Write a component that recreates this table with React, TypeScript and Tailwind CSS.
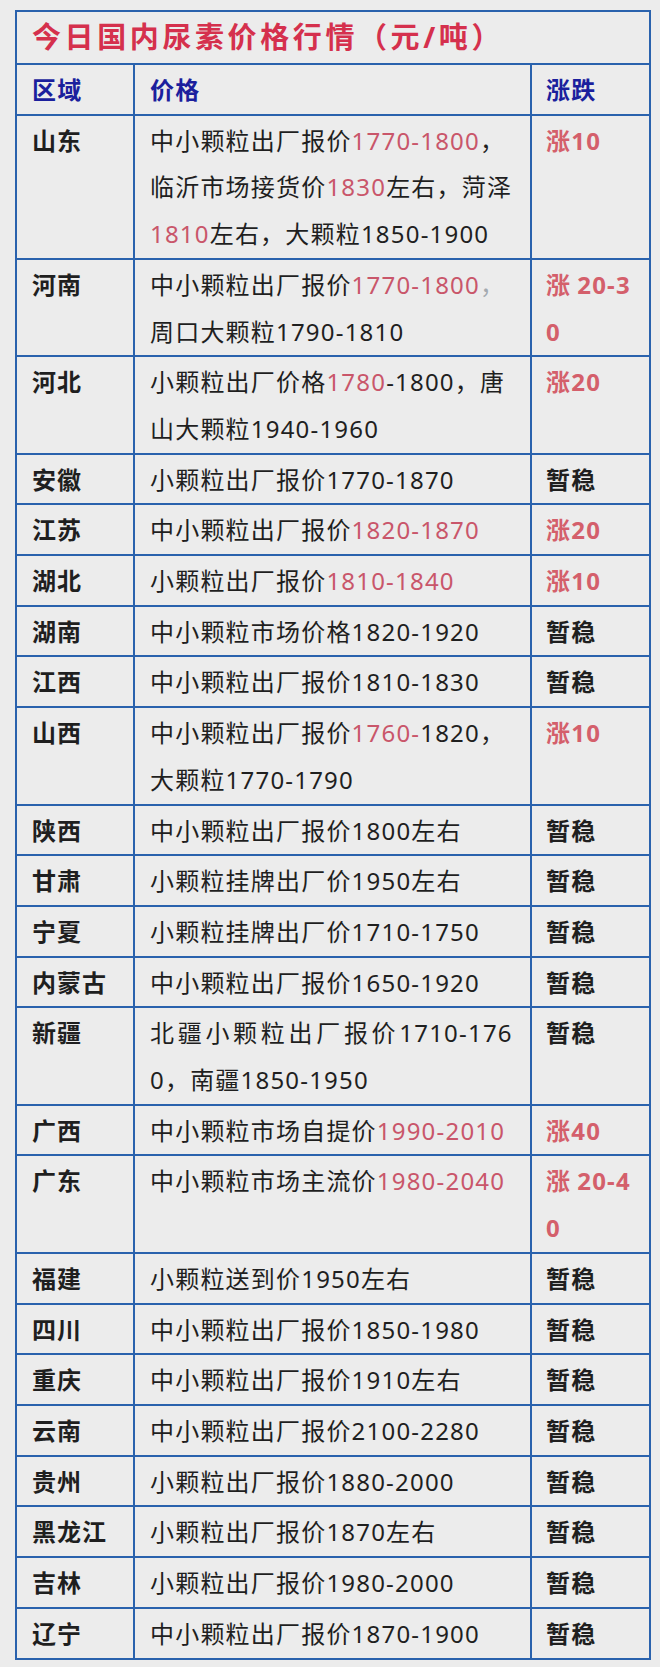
type Seg = { text: string; tone?: "red" | "muted"; wide?: boolean };
type Row = { region: string; lines: Seg[][]; change: string[]; up?: boolean };

const t = (text: string): Seg => ({ text });
const red = (text: string): Seg => ({ text, tone: "red" });

const rows: Row[] = [
  {
    region: "山东",
    lines: [
      [t("中小颗粒出厂报价"), red("1770-1800"), t("，")],
      [t("临沂市场接货价"), red("1830"), t("左右，菏泽")],
      [red("1810"), t("左右，大颗粒1850-1900")],
    ],
    change: ["涨10"],
    up: true,
  },
  {
    region: "河南",
    lines: [
      [t("中小颗粒出厂报价"), red("1770-1800"), { text: "，", tone: "muted" }],
      [t("周口大颗粒1790-1810")],
    ],
    change: ["涨 20-3", "0"],
    up: true,
  },
  {
    region: "河北",
    lines: [
      [t("小颗粒出厂价格"), red("1780"), t("-1800，唐")],
      [t("山大颗粒1940-1960")],
    ],
    change: ["涨20"],
    up: true,
  },
  { region: "安徽", lines: [[t("小颗粒出厂报价1770-1870")]], change: ["暂稳"] },
  { region: "江苏", lines: [[t("中小颗粒出厂报价"), red("1820-1870")]], change: ["涨20"], up: true },
  { region: "湖北", lines: [[t("小颗粒出厂报价"), red("1810-1840")]], change: ["涨10"], up: true },
  { region: "湖南", lines: [[t("中小颗粒市场价格1820-1920")]], change: ["暂稳"] },
  { region: "江西", lines: [[t("中小颗粒出厂报价1810-1830")]], change: ["暂稳"] },
  {
    region: "山西",
    lines: [
      [t("中小颗粒出厂报价"), red("1760-"), t("1820，")],
      [t("大颗粒1770-1790")],
    ],
    change: ["涨10"],
    up: true,
  },
  { region: "陕西", lines: [[t("中小颗粒出厂报价1800左右")]], change: ["暂稳"] },
  { region: "甘肃", lines: [[t("小颗粒挂牌出厂价1950左右")]], change: ["暂稳"] },
  { region: "宁夏", lines: [[t("小颗粒挂牌出厂价1710-1750")]], change: ["暂稳"] },
  { region: "内蒙古", lines: [[t("中小颗粒出厂报价1650-1920")]], change: ["暂稳"] },
  {
    region: "新疆",
    lines: [
      [{ text: "北疆小颗粒出厂报价", wide: true }, t("1710-176")],
      [t("0，南疆1850-1950")],
    ],
    change: ["暂稳"],
  },
  { region: "广西", lines: [[t("中小颗粒市场自提价"), red("1990-2010")]], change: ["涨40"], up: true },
  {
    region: "广东",
    lines: [[t("中小颗粒市场主流价"), red("1980-2040")]],
    change: ["涨 20-4", "0"],
    up: true,
  },
  { region: "福建", lines: [[t("小颗粒送到价1950左右")]], change: ["暂稳"] },
  { region: "四川", lines: [[t("中小颗粒出厂报价1850-1980")]], change: ["暂稳"] },
  { region: "重庆", lines: [[t("中小颗粒出厂报价1910左右")]], change: ["暂稳"] },
  { region: "云南", lines: [[t("中小颗粒出厂报价2100-2280")]], change: ["暂稳"] },
  { region: "贵州", lines: [[t("小颗粒出厂报价1880-2000")]], change: ["暂稳"] },
  { region: "黑龙江", lines: [[t("小颗粒出厂报价1870左右")]], change: ["暂稳"] },
  { region: "吉林", lines: [[t("小颗粒出厂报价1980-2000")]], change: ["暂稳"] },
  { region: "辽宁", lines: [[t("中小颗粒出厂报价1870-1900")]], change: ["暂稳"] },
];

const cell = "border-2 border-[#2a62ad] align-top pt-[2px] pb-0 leading-[46.7px]";

function SegSpan({ seg }: { seg: Seg }) {
  const tone =
    seg.tone === "red" ? "text-[#c9566a]" : seg.tone === "muted" ? "text-[#a3aab0]" : "";
  return <span className={`${tone} ${seg.wide ? "tracking-[3.7px]" : ""}`}>{seg.text}</span>;
}

function ChangeLine({ text }: { text: string }) {
  if (text.includes(" ")) {
    const [head, rest] = text.split(" ");
    return (
      <div className="whitespace-nowrap">
        <span className="mr-[6px]">{head}</span>
        {rest}
      </div>
    );
  }
  return <div className="whitespace-nowrap">{text}</div>;
}

export default function App() {
  return (
    <div className="min-h-[1667px] bg-[#ececec] pt-[10px] pl-[15px] font-['Noto_Sans','Noto_Sans_CJK_SC',sans-serif]">
      <table className="table-fixed border-collapse w-[634px] text-[24px] tracking-[1.2px] text-[#1f1f1f]">
        <colgroup>
          <col className="w-[118px]" />
          <col className="w-[397px]" />
          <col className="w-[119px]" />
        </colgroup>
        <thead>
          <tr>
            <th
              colSpan={3}
              className="border-2 border-[#2a62ad] pl-[15px] pb-[2px] text-left align-middle leading-[49px] text-[29px] font-bold tracking-[3.6px] text-[#d5304d]"
            >
              今日国内尿素价格行情（元/吨）
            </th>
          </tr>
          <tr className="text-left font-bold text-[#1b1f9d]">
            <th className={`${cell} pl-[15px]`}>区域</th>
            <th className={`${cell} pl-[15px]`}>价格</th>
            <th className={`${cell} pl-[14px]`}>涨跌</th>
          </tr>
        </thead>
        <tbody>
          {rows.map((row) => (
            <tr key={row.region}>
              <td className={`${cell} pl-[15px] font-bold tracking-[1px] whitespace-nowrap`}>{row.region}</td>
              <td className={`${cell} pl-[15px] pr-[10px]`}>
                {row.lines.map((line, i) => (
                  <div key={i} className="whitespace-nowrap">
                    {line.map((seg, j) => (
                      <SegSpan key={j} seg={seg} />
                    ))}
                  </div>
                ))}
              </td>
              <td className={`${cell} pl-[14px] font-bold ${row.up ? "text-[#d45f6b]" : "text-[#1f1f1f]"}`}>
                {row.change.map((line, i) => (
                  <ChangeLine key={i} text={line} />
                ))}
              </td>
            </tr>
          ))}
        </tbody>
      </table>
    </div>
  );
}
